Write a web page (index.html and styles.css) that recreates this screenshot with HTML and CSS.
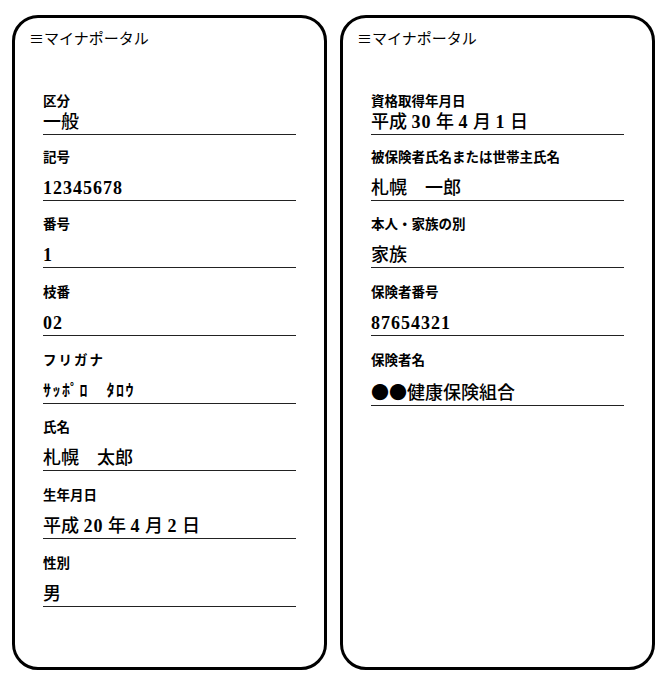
FILE: index.html
```html
<!DOCTYPE html>
<html lang="ja">
<head>
<meta charset="utf-8">
<title>マイナポータル</title>
<link rel="stylesheet" href="styles.css">
</head>
<body>
<div class="screens">
  <section class="phone">
    <header class="bar">≡マイナポータル</header>
    <div class="fields">
      <div class="field first"><div class="label">区分</div><div class="value">一般</div></div>
      <div class="field"><div class="label">記号</div><div class="value"><span class="num">12345678</span></div></div>
      <div class="field"><div class="label">番号</div><div class="value"><span class="num">1</span></div></div>
      <div class="field"><div class="label">枝番</div><div class="value"><span class="num">02</span></div></div>
      <div class="field"><div class="label kana">フリガナ</div><div class="value hankaku">ｻｯﾎﾟﾛ　ﾀﾛｳ</div></div>
      <div class="field"><div class="label">氏名</div><div class="value">札幌　太郎</div></div>
      <div class="field"><div class="label">生年月日</div><div class="value">平成 <span class="num">20</span> 年 <span class="num">4</span> 月 <span class="num">2</span> 日</div></div>
      <div class="field"><div class="label">性別</div><div class="value">男</div></div>
    </div>
  </section>
  <section class="phone">
    <header class="bar">≡マイナポータル</header>
    <div class="fields">
      <div class="field first"><div class="label">資格取得年月日</div><div class="value">平成 <span class="num">30</span> 年 <span class="num">4</span> 月 <span class="num">1</span> 日</div></div>
      <div class="field"><div class="label">被保険者氏名または世帯主氏名</div><div class="value">札幌　一郎</div></div>
      <div class="field"><div class="label">本人・家族の別</div><div class="value">家族</div></div>
      <div class="field"><div class="label">保険者番号</div><div class="value"><span class="num">87654321</span></div></div>
      <div class="field"><div class="label">保険者名</div><div class="value"><span class="mark">●●</span>健康保険組合</div></div>
    </div>
  </section>
</div>
</body>
</html>
```

FILE: styles.css
```css
html, body {
  margin: 0;
  background: #fff;
}

body {
  font-family: "Liberation Serif", "Noto Sans CJK JP", serif;
  color: #000;
}

.screens {
  display: flex;
  gap: 13px;
  padding: 15px 0 0 12px;
}

.phone {
  box-sizing: border-box;
  width: 315px;
  height: 655px;
  border: 3px solid #000;
  border-radius: 26px;
}

.bar {
  font-family: "Noto Sans CJK JP", sans-serif;
  font-size: 15px;
  line-height: 20px;
  padding: 10px 0 0 14px;
}

.fields {
  padding: 44px 28px 0;
}

.field {
  margin-bottom: 14.67px;
}

.field.first {
  margin-bottom: 12.67px;
}

.label {
  font-family: "Noto Sans CJK JP", sans-serif;
  font-weight: 700;
  font-size: 13.5px;
  line-height: 16px;
}

.label.kana {
  letter-spacing: 2px;
}

.value {
  font-weight: 500;
  font-size: 18px;
  line-height: 24px;
  margin-top: 12px;
  border-bottom: 1px solid #222;
  white-space: pre;
}

.field.first .value {
  margin-top: 2px;
}

.num {
  font-weight: 700;
  letter-spacing: 1px;
}

.mark {
  font-family: "Noto Sans CJK JP", sans-serif;
}

.value.hankaku {
  font-weight: 700;
  font-size: 16px;
  letter-spacing: 1.5px;
}
```
